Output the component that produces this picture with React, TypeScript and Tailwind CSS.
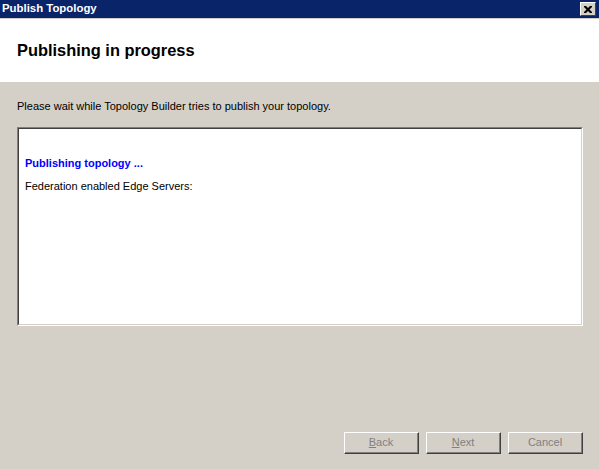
export default function App() {
  const font = { fontFamily: '"Liberation Sans", Arial, sans-serif' };
  return (
    <div className="w-[599px] h-[469px] bg-[#d4d0c8] flex flex-col overflow-hidden text-[11px] text-black" style={font}>
      <div className="h-[18px] bg-[#0a246a] flex items-center justify-between pl-[2px] pr-[3px]">
        <span className="text-white font-bold text-[11.4px] leading-none">Publish Topology</span>
        <div className="w-[16px] h-[14px] bg-[#d4d0c8] border-t border-l border-white border-r border-b border-r-[#404040] border-b-[#404040] flex items-center justify-center">
          <svg width="8" height="7" viewBox="0 0 8 7">
            <path d="M0 0h2l2 2l2-2h2v1l-2.5 2.5l2.5 2.5v1h-2l-2-2l-2 2h-2v-1l2.5-2.5l-2.5-2.5z" fill="#000" />
          </svg>
        </div>
      </div>
      <div className="h-[64px] bg-white border-t border-[#d4d0c8] flex items-center pl-[17px]">
        <span className="font-bold text-[16.4px] leading-none">Publishing in progress</span>
      </div>
      <div className="flex-1 flex flex-col px-[17px]">
        <div className="mt-[19px] leading-none">Please wait while Topology Builder tries to publish your topology.</div>
        <div className="mt-[15px] h-[199px] w-[566px] border-t border-l border-[#808080] border-r border-b border-r-white border-b-white">
          <div className="h-full w-full border-t border-l border-[#404040] border-r border-b border-r-[#d4d0c8] border-b-[#d4d0c8] bg-white pl-[6px] pt-[29px]">
            <div className="text-[#0000ff] font-bold leading-none">Publishing topology ...</div>
            <div className="mt-[12px] leading-none">Federation enabled Edge Servers:</div>
          </div>
        </div>
        <div className="flex-1" />
        <div className="flex justify-end gap-[7px] mb-[15px] mr-[-1px]">
          {[
            ["B", "ack"],
            ["N", "ext"],
            ["", "Cancel"],
          ].map(([u, rest], i) => (
            <div key={i} className="w-[75px] h-[22px] border-t border-l border-white border-r border-b border-r-[#404040] border-b-[#404040]">
              <div className="h-full w-full border-r border-b border-[#808080] flex items-center justify-center text-[#808080]">
                <span>
                  <span className="underline">{u}</span>
                  {rest}
                </span>
              </div>
            </div>
          ))}
        </div>
      </div>
    </div>
  );
}
